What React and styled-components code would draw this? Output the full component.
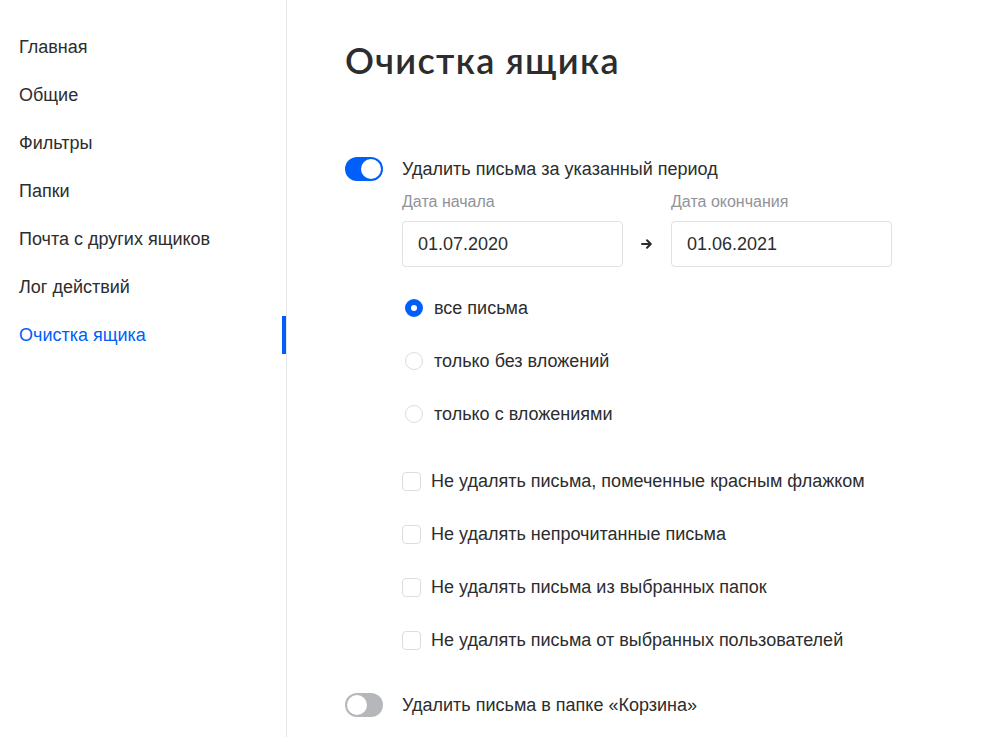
import React from 'react';
import styled, { createGlobalStyle } from 'styled-components';

const GlobalStyle = createGlobalStyle`
  html, body {
    margin: 0;
    padding: 0;
    background: #fff;
    font-family: "Liberation Sans", Arial, sans-serif;
    color: #2c2d2e;
  }
`;

const menu = ['Главная', 'Общие', 'Фильтры', 'Папки', 'Почта с других ящиков', 'Лог действий', 'Очистка ящика'];

const App = () => {
    return (
        <React.Fragment>
            <GlobalStyle />
            <Page>
                <Sidebar>
                    {menu.map((item, i) => (
                        <MenuItem key={item} active={i === menu.length - 1}>{item}</MenuItem>
                    ))}
                </Sidebar>
                <Main>
                    <Title>Очистка ящика</Title>

                    <ToggleRow>
                        <Toggle on />
                        <ToggleLabel>Удалить письма за указанный период</ToggleLabel>
                    </ToggleRow>

                    <Sub>
                        <Dates>
                            <DateField>
                                <FieldLabel>Дата начала</FieldLabel>
                                <DateInput>01.07.2020</DateInput>
                            </DateField>
                            <Arrow>
                                <svg width="12" height="12" viewBox="0 0 12 12">
                                    <path d="M1 6h8.5M6 2.2L9.8 6 6 9.8" stroke="#2c2d2e" strokeWidth="2" fill="none" strokeLinecap="round" strokeLinejoin="round" />
                                </svg>
                            </Arrow>
                            <DateField>
                                <FieldLabel>Дата окончания</FieldLabel>
                                <DateInput>01.06.2021</DateInput>
                            </DateField>
                        </Dates>

                        <Radios>
                            <Option><Radio checked /><RadioText>все письма</RadioText></Option>
                            <Option><Radio /><RadioText>только без вложений</RadioText></Option>
                            <Option><Radio /><RadioText>только с вложениями</RadioText></Option>
                        </Radios>

                        <Checks>
                            <Option><Check /><CheckText>Не удалять письма, помеченные красным флажком</CheckText></Option>
                            <Option><Check /><CheckText>Не удалять непрочитанные письма</CheckText></Option>
                            <Option><Check /><CheckText>Не удалять письма из выбранных папок</CheckText></Option>
                            <Option><Check /><CheckText>Не удалять письма от выбранных пользователей</CheckText></Option>
                        </Checks>
                    </Sub>

                    <ToggleRow last>
                        <Toggle />
                        <ToggleLabel>Удалить письма в папке «Корзина»</ToggleLabel>
                    </ToggleRow>
                </Main>
            </Page>
        </React.Fragment>
    );
};
export default App;


const Page = styled.div`
    display: flex;
    width: 100%;
    height: 737px;
    overflow: hidden;
`;

const Sidebar = styled.nav`
    width: 286px;
    flex-shrink: 0;
    border-right: 1px solid #e6e7e9;
    padding-top: 28px;
    display: flex;
    flex-direction: column;
    gap: 10px;
`;

const MenuItem = styled.div`
    position: relative;
    height: 38px;
    line-height: 38px;
    padding-left: 19px;
    font-size: 18px;
    color: ${p => (p.active ? '#005ff9' : '#2c2d2e')};

    &::after {
        content: '';
        display: ${p => (p.active ? 'block' : 'none')};
        position: absolute;
        right: 0;
        top: 0;
        width: 4px;
        height: 38px;
        background: #005ff9;
    }
`;

const Main = styled.main`
    flex: 1;
    padding-left: 58px;
    padding-top: 37px;
`;

const Title = styled.h1`
    margin: 0;
    font-family: "Lato", "Liberation Sans", sans-serif;
    font-weight: 600;
    font-size: 36px;
    line-height: 46px;
    letter-spacing: 1.3px;
    color: #2c2d2e;
`;

const ToggleRow = styled.div`
    display: flex;
    align-items: center;
    gap: 19px;
    margin-top: ${p => (p.last ? '41px' : '74px')};
`;

const Toggle = styled.div`
    position: relative;
    width: 38px;
    height: 24px;
    border-radius: 12px;
    background: ${p => (p.on ? '#005ff9' : '#b6b7bb')};
    flex-shrink: 0;

    &::after {
        content: '';
        position: absolute;
        top: 2px;
        left: ${p => (p.on ? '16px' : '2px')};
        width: 20px;
        height: 20px;
        border-radius: 50%;
        background: #fff;
    }
`;

const ToggleLabel = styled.span`
    font-size: 18px;
    line-height: 24px;
`;

const Sub = styled.div`
    padding-left: 57px;
`;

const Dates = styled.div`
    display: flex;
    align-items: flex-end;
    margin-top: 11px;
`;

const DateField = styled.div`
    display: flex;
    flex-direction: column;
    gap: 9px;
`;

const FieldLabel = styled.label`
    font-size: 16px;
    line-height: 20px;
    color: #919399;
`;

const DateInput = styled.div`
    width: 221px;
    height: 46px;
    box-sizing: border-box;
    border: 1px solid #e0e1e3;
    border-radius: 4px;
    padding-left: 15px;
    font-size: 18px;
    line-height: 44px;
    color: #2c2d2e;
`;

const Arrow = styled.div`
    width: 48px;
    height: 46px;
    display: flex;
    align-items: center;
    justify-content: center;
`;

const Radios = styled.div`
    display: flex;
    flex-direction: column;
    gap: 29px;
    margin-top: 29px;
    padding-left: 3px;
`;

const Checks = styled.div`
    display: flex;
    flex-direction: column;
    gap: 29px;
    margin-top: 43px;
`;

const Option = styled.div`
    display: flex;
    align-items: center;
    height: 24px;
    font-size: 18px;
`;

const Radio = styled.span`
    width: 18px;
    height: 18px;
    box-sizing: border-box;
    border-radius: 50%;
    flex-shrink: 0;
    border: ${p => (p.checked ? '6px solid #005ff9' : '1px solid #dcdde0')};
    background: #fff;
`;

const RadioText = styled.span`
    margin-left: 11px;
`;

const Check = styled.span`
    width: 19px;
    height: 19px;
    box-sizing: border-box;
    border: 1px solid #dcdde0;
    border-radius: 4px;
    flex-shrink: 0;
`;

const CheckText = styled.span`
    margin-left: 10px;
`;
